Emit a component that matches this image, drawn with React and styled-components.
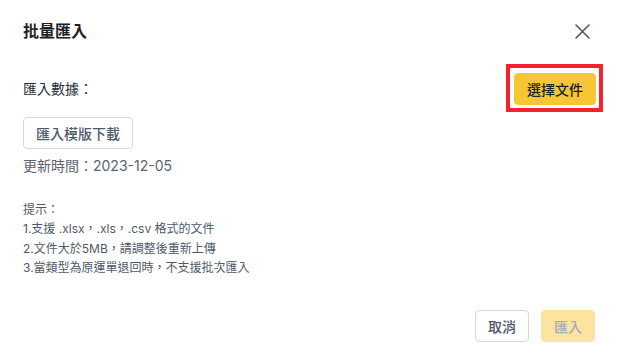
import React from "react";
import styled, { createGlobalStyle } from "styled-components";

const GlobalStyle = createGlobalStyle`
  html, body {
    margin: 0;
    padding: 0;
    background: #fff;
  }
  body {
    font-family: Inter, "Noto Sans CJK TC", sans-serif;
  }
`;

const Dialog = styled.div`
  height: 100vh;
  box-sizing: border-box;
  display: flex;
  flex-direction: column;
  background: #fff;
`;

const Header = styled.div`
  display: flex;
  align-items: center;
  justify-content: space-between;
  padding: 20px 25px 0 23px;
`;

const Title = styled.div`
  font-size: 16px;
  line-height: 22px;
  font-weight: 700;
  color: #1d2129;
`;

const CloseButton = styled.button`
  width: 20px;
  height: 20px;
  padding: 0;
  border: none;
  background: none;
  display: flex;
  align-items: center;
  justify-content: center;
  cursor: pointer;
`;

const Body = styled.div`
  padding: 30px 22px 0 23px;
`;

const Row = styled.div`
  display: flex;
  align-items: center;
  justify-content: space-between;
  height: 32px;
`;

const Label = styled.div`
  font-size: 14px;
  color: #272e3b;
`;

const Button = styled.button`
  height: 32px;
  box-sizing: border-box;
  padding: 0 ${p => p.$px || 15}px;
  border-radius: 4px;
  font-family: inherit;
  font-size: 14px;
  font-weight: 500;
  cursor: pointer;
  border: 1px solid ${p => (p.$primary ? p.$disabled ? "#fce3a0" : "#f7c634" : "#d3d7e0")};
  background: ${p => (p.$primary ? p.$disabled ? "#fce3a0" : "#f7c634" : "#fff")};
  color: ${p => (p.$primary ? p.$disabled ? "#a8adb7" : "#1d2129" : "#4e5969")};
`;

const Highlight = styled.span`
  display: inline-flex;
  margin-right: -8px;
  padding: 5px 3px 3px 4px;
  border: 4px solid #f5222d;
`;

const TemplateButton = styled(Button)`
  margin-top: 13px;
  width: 110px;
  padding: 0;
`;

const UpdateTime = styled.div`
  margin-top: 6px;
  font-size: 14px;
  line-height: 22px;
  color: #5c6370;
`;

const Hint = styled.div`
  margin-top: 23px;
  font-size: 12px;
  line-height: 19.3px;
  color: #4e5969;
`;

const Footer = styled.div`
  margin-top: auto;
  display: flex;
  justify-content: flex-end;
  gap: 12px;
  padding: 0 22px 12px 0;
`;

const CloseIcon = () => (
  <svg width="15" height="15" viewBox="0 0 15 15" fill="none">
    <path d="M1 1L14 14M14 1L1 14" stroke="#4e5969" strokeWidth="1.6" strokeLinecap="round" />
  </svg>
);

const hints = [
  "提示：",
  "1.支援 .xlsx，.xls，.csv 格式的文件",
  "2.文件大於5MB，請調整後重新上傳",
  "3.當類型為原運單退回時，不支援批次匯入"
];

const App = () => (
  <Dialog>
    <GlobalStyle />
    <Header>
      <Title>批量匯入</Title>
      <CloseButton>
        <CloseIcon />
      </CloseButton>
    </Header>
    <Body>
      <Row>
        <Label>匯入數據：</Label>
        <Highlight>
          <Button $primary $px={12}>選擇文件</Button>
        </Highlight>
      </Row>
      <TemplateButton>匯入模版下載</TemplateButton>
      <UpdateTime>更新時間：2023-12-05</UpdateTime>
      <Hint>
        {hints.map(h => (
          <div key={h}>{h}</div>
        ))}
      </Hint>
    </Body>
    <Footer>
      <Button $px={12}>取消</Button>
      <Button $primary $disabled $px={12}>匯入</Button>
    </Footer>
  </Dialog>
);

export default App;
